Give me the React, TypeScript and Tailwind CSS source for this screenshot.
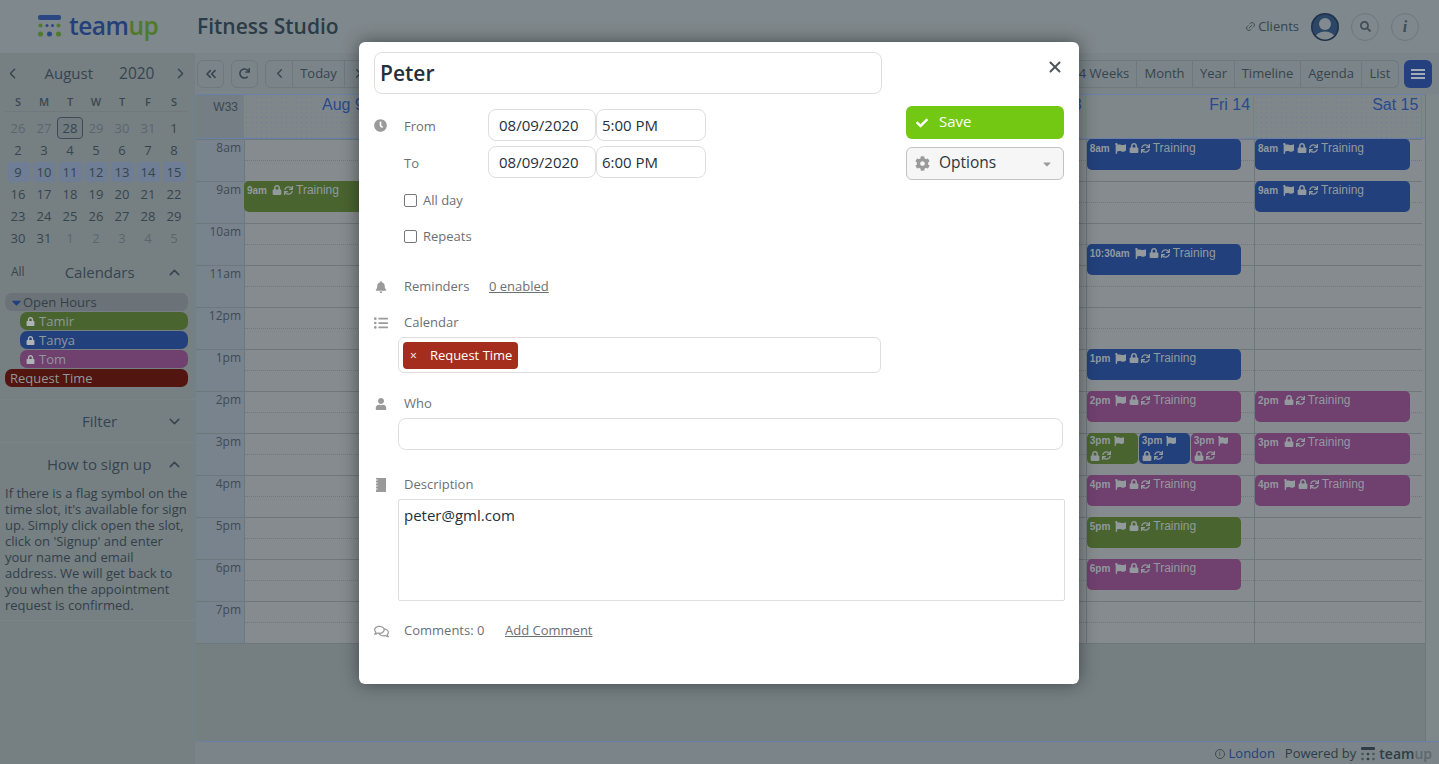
import { ChevronDown, ChevronLeft, ChevronRight, ChevronsLeft, ChevronUp, Link2, X } from "lucide-react";
import {
  FaBell,
  FaCaretDown,
  FaCheck,
  FaClock,
  FaCog,
  FaFlag,
  FaListUl,
  FaLock,
  FaRedo,
  FaRegComments,
  FaSearch,
  FaSync,
  FaUser,
} from "react-icons/fa";

const weeks = [
  ["26", "27", "28", "29", "30", "31", "1"],
  ["2", "3", "4", "5", "6", "7", "8"],
  ["9", "10", "11", "12", "13", "14", "15"],
  ["16", "17", "18", "19", "20", "21", "22"],
  ["23", "24", "25", "26", "27", "28", "29"],
  ["30", "31", "1", "2", "3", "4", "5"],
];

const hours = ["8am", "9am", "10am", "11am", "12pm", "1pm", "2pm", "3pm", "4pm", "5pm", "6pm", "7pm"];

type CalEvent = {
  time: string;
  at: number;
  color: string;
  flag?: boolean;
  x?: number;
  w?: number;
  narrow?: boolean;
};

const green = "#4a6430";
const blue = "#22407b";
const purple = "#70406f";

const days: { label: string; weekend?: boolean; events: CalEvent[] }[] = [
  { label: "Aug 9", weekend: true, events: [{ time: "9am", at: 1, color: green, x: -1, w: 168 }] },
  { label: "Mon 10", events: [] },
  { label: "Tue 11", events: [] },
  { label: "Wed 12", events: [] },
  { label: "Thu 13", events: [] },
  {
    label: "Fri 14",
    events: [
      { time: "8am", at: 0, color: blue, flag: true },
      { time: "10:30am", at: 2.5, color: blue, flag: true },
      { time: "1pm", at: 5, color: blue, flag: true },
      { time: "2pm", at: 6, color: purple, flag: true },
      { time: "3pm", at: 7, color: green, flag: true, x: 0, w: 51, narrow: true },
      { time: "3pm", at: 7, color: blue, flag: true, x: 52, w: 51, narrow: true },
      { time: "3pm", at: 7, color: purple, flag: true, x: 104, w: 50, narrow: true },
      { time: "4pm", at: 8, color: purple, flag: true },
      { time: "5pm", at: 9, color: green, flag: true },
      { time: "6pm", at: 10, color: purple, flag: true },
    ],
  },
  {
    label: "Sat 15",
    weekend: true,
    events: [
      { time: "8am", at: 0, color: blue, flag: true, w: 155 },
      { time: "9am", at: 1, color: blue, flag: true, w: 155 },
      { time: "2pm", at: 6, color: purple, w: 155 },
      { time: "3pm", at: 7, color: purple, w: 155 },
      { time: "4pm", at: 8, color: purple, flag: true, w: 155 },
    ],
  },
];

function Logo() {
  return (
    <svg width="24" height="23" viewBox="0 0 24 23" className="shrink-0">
      <rect x="0" y="0" width="23" height="5" rx="2" fill="#2a4783" />
      <circle cx="2.5" cy="10.5" r="2" fill="#4f7a2c" />
      <circle cx="9" cy="10.5" r="1.5" fill="#2a4783" />
      <circle cx="14.5" cy="10.5" r="1.5" fill="#2a4783" />
      <circle cx="20.5" cy="10.5" r="2" fill="#4f7a2c" />
      <circle cx="2.5" cy="19" r="2.5" fill="#4f7a2c" />
      <circle cx="11.5" cy="19" r="2.5" fill="#2a4783" />
      <circle cx="20.5" cy="19" r="2.5" fill="#4f7a2c" />
    </svg>
  );
}

function Avatar() {
  return (
    <svg width="28" height="28" viewBox="0 0 28 28" className="ml-[12px] shrink-0">
      <clipPath id="avatar-clip">
        <circle cx="14" cy="14" r="12.5" />
      </clipPath>
      <circle cx="14" cy="14" r="14" fill="#1f3148" />
      <circle cx="14" cy="14" r="12.5" fill="#2b4666" />
      <g clipPath="url(#avatar-clip)" fill="#818a8e">
        <circle cx="14" cy="11" r="6" />
        <ellipse cx="14" cy="25" rx="10" ry="6.5" />
      </g>
    </svg>
  );
}

function Header() {
  return (
    <header className="flex h-[53px] shrink-0 items-center bg-[#7f888c] pl-[38px] pr-[20px]">
      <Logo />
      <span className="ml-[7px] w-[128px] text-[24.5px] leading-none font-semibold tracking-[-0.5px] text-[#24407a]">
        team<span className="text-[#4f7a2c]">up</span>
      </span>
      <span className="text-[21px] font-semibold text-[#2b3b47]">Fitness Studio</span>
      <div className="ml-auto flex items-center">
        <Link2 size={11} className="-rotate-45 text-[#3c4a54]" />
        <span className="ml-[2px] text-[13px] text-[#36444e]">Clients</span>
        <Avatar />
        <div className="ml-[12px] flex h-[28px] w-[28px] items-center justify-center rounded-full border border-[#6e787c]">
          <FaSearch size={11} className="text-[#414d55]" />
        </div>
        <div className="ml-[12px] flex h-[28px] w-[28px] items-center justify-center rounded-full border border-[#6e787c] font-['Liberation_Serif',serif] text-[16px] font-bold italic text-[#414d55]">
          i
        </div>
      </div>
    </header>
  );
}

function MiniCalendar() {
  return (
    <div>
      <div className="flex h-[41px] items-center justify-between pl-[4px] pr-[6px] text-[15px] text-[#36444e]">
        <ChevronLeft size={17} />
        <span className="ml-[23px] w-[74px]">August</span>
        <span className="mr-[17px] text-[15.5px]">2020</span>
        <ChevronRight size={17} />
      </div>
      <div className="ml-[5px] mr-[8px] grid h-[18px] grid-cols-7 items-center border-b border-[#6f797d] text-center text-[11px] font-semibold text-[#3a4751]">
        {["S", "M", "T", "W", "T", "F", "S"].map((d, i) => (
          <span key={i}>{d}</span>
        ))}
      </div>
      <div className="ml-[5px] mr-[8px] mt-[5px] grid grid-cols-7 text-center text-[13px] leading-[22px]">
        {weeks.flatMap((week, w) =>
          week.map((d, i) => {
            const muted = (w === 0 && i < 6) || (w === 5 && i > 1);
            if (w === 0 && d === "28") {
              return (
                <span key={d} className="h-[22px] rounded-[4px] border border-[#3f4a52] bg-[#727c80] leading-[20px] text-[#36444e]">
                  {d}
                </span>
              );
            }
            return (
              <span key={`${w}-${d}`} className={`flex h-[22px] items-center justify-center ${muted ? "text-[#5a666e]" : "text-[#36444e]"}`}>
                {w === 2 ? <span className="block h-[20px] w-[23px] rounded-[3px] bg-[#6f7e94] leading-[20px]">{d}</span> : d}
              </span>
            );
          }),
        )}
      </div>
    </div>
  );
}

function CalendarRow({ name, bg, indent }: { name: string; bg: string; indent?: boolean }) {
  return (
    <div
      className={`flex h-[18px] items-center rounded-[7px] pt-[1px] text-[13px] text-[#8f989b] ${indent ? "ml-[15px] pl-[6px]" : "pl-[5px]"}`}
      style={{ backgroundColor: bg }}
    >
      {indent && <FaLock size={9} className="mr-[4px] text-[#aeb4b6]" />}
      {name}
    </div>
  );
}

function Sidebar() {
  return (
    <aside className="w-[195px] shrink-0 bg-[#768083]">
      <MiniCalendar />
      <div className="mt-[10px] flex h-[26px] items-center pl-[11px] pr-[12px] text-[#36444e]">
        <span className="text-[12px]">All</span>
        <span className="ml-[40px] text-[15px]">Calendars</span>
        <ChevronUp size={17} className="ml-auto" />
      </div>
      <div className="mt-[8px] ml-[5px] flex w-[183px] flex-col gap-[1px]">
        <div className="flex h-[18px] items-center rounded-[7px] bg-[#6c7378] pl-[4px] pt-[1px] text-[13px] text-[#323f48]">
          <FaCaretDown size={15} className="mr-[-1px] text-[#22407b]" />
          Open Hours
        </div>
        <CalendarRow name="Tamir" bg={green} indent />
        <CalendarRow name="Tanya" bg={blue} indent />
        <CalendarRow name="Tom" bg={purple} indent />
        <CalendarRow name="Request Time" bg="#52150f" />
      </div>
      <div className="mt-[12px] flex h-[44px] items-center border-y border-[#7a8488] pr-[12px] text-[#36444e]">
        <span className="ml-[82px] text-[15px]">Filter</span>
        <ChevronDown size={17} className="ml-auto" />
      </div>
      <div className="flex h-[42px] items-center pr-[12px] text-[#36444e]">
        <span className="ml-[47px] text-[15px]">How to sign up</span>
        <ChevronUp size={17} className="ml-auto" />
      </div>
      <p className="border-b border-[#7a8488] px-[5px] pb-[7px] text-[13px] leading-[16px] text-[#323f48]">
        If there is a flag symbol on the time slot, it's available for sign up. Simply click open the slot, click on 'Signup' and enter your name and email
        <br />
        address. We will get back to you when the appointment request is confirmed.
      </p>
    </aside>
  );
}

function ToolButton({ children, className = "" }: { children: React.ReactNode; className?: string }) {
  return (
    <div className={`flex h-[28px] items-center justify-center border border-[#6f797d] text-[13px] text-[#36444e] ${className}`}>
      {children}
    </div>
  );
}

function Toolbar() {
  const views: [string, string][] = [
    ["4 Weeks", "w-[66px]"],
    ["Month", "w-[56px]"],
    ["Year", "w-[42px]"],
    ["Timeline", "w-[66px]"],
    ["Agenda", "w-[61px]"],
    ["List", "w-[37px]"],
  ];
  return (
    <div className="flex h-[41px] shrink-0 items-center bg-[#7b8589] pl-[2px] pr-[7px]">
      <ToolButton className="w-[27px] rounded-[6px]">
        <ChevronsLeft size={16} strokeWidth={2.4} />
      </ToolButton>
      <ToolButton className="ml-[7px] w-[27px] rounded-[6px]">
        <FaRedo size={11} />
      </ToolButton>
      <ToolButton className="ml-[7px] w-[28px] rounded-l-[6px]">
        <ChevronLeft size={15} />
      </ToolButton>
      <ToolButton className="w-[52px] border-l-0">Today</ToolButton>
      <ToolButton className="w-[28px] border-l-0">
        <ChevronRight size={15} />
      </ToolButton>
      <div className="ml-auto flex">
        {views.map(([v, w], i) => (
          <ToolButton key={v} className={`${w} ${i > 0 ? "border-l-0" : ""} ${i === views.length - 1 ? "rounded-r-[6px]" : ""}`}>
            {v}
          </ToolButton>
        ))}
      </div>
      <div className="ml-[5px] flex h-[28px] w-[28px] flex-col items-center justify-center gap-[2px] rounded-[6px] bg-[#24407f]">
        <span className="h-[2px] w-[14px] bg-[#a3acb5]" />
        <span className="h-[2px] w-[14px] bg-[#a3acb5]" />
        <span className="h-[2px] w-[14px] bg-[#a3acb5]" />
      </div>
    </div>
  );
}

function EventChip({ ev }: { ev: CalEvent }) {
  const icons = (
    <>
      {!ev.narrow && ev.flag && <FaFlag size={11} className="mr-[3px] shrink-0" />}
      <FaLock size={10} className="mr-[2px] shrink-0" />
      <FaSync size={9} className="mr-[3px] shrink-0" />
    </>
  );
  return (
    <div
      className="absolute overflow-hidden rounded-[5px] pl-[3px] font-['Liberation_Sans',sans-serif] text-[#929a9e]"
      style={{
        top: ev.at * 42,
        left: ev.x ?? 0,
        width: ev.w ?? 154,
        height: 31,
        backgroundColor: ev.color,
      }}
    >
      {ev.narrow ? (
        <>
          <div className="flex h-[15px] items-center text-[10px] font-bold">
            {ev.time}
            <FaFlag size={10} className="ml-[4px]" />
          </div>
          <div className="flex h-[15px] items-center">{icons}</div>
        </>
      ) : (
        <div className="flex h-[18px] items-center whitespace-nowrap">
          <span className="mr-[5px] text-[10px] font-bold">{ev.time}</span>
          {icons}
          <span className="text-[12px]">Training</span>
        </div>
      )}
    </div>
  );
}

function CalendarGrid() {
  return (
    <div className="flex min-h-0 flex-1 border-b border-l border-[#6a80a8] bg-[#757f82]">
      <div className="w-[1229px] shrink-0">
        <div className="grid h-[45px] grid-cols-[48px_repeat(7,168.35px)] border-y border-[#6a80a8] bg-[#7f878b]">
          <div className="flex justify-end border-r border-[#6a80a8] bg-[#747e84] pr-[5px] pt-[3px] font-['Liberation_Sans',sans-serif] text-[12px] text-[#3a4751]">
            W33
          </div>
          {days.map((d, i) => (
            <div
              key={d.label}
              className={`border-r border-[#6a80a8] font-['Liberation_Sans',sans-serif] text-[16px] leading-[20px] text-[#2a4a8c] ${i === 0 ? "pl-[78px]" : "pr-[3px] text-right"} ${d.weekend ? "bg-[radial-gradient(#6d7f9e_0.6px,transparent_0.6px)] bg-[length:5px_5px]" : ""}`}
            >
              {d.label}
            </div>
          ))}
        </div>
        <div className="grid grid-cols-[48px_repeat(7,168.35px)] border-b border-[#6e777c] bg-[#858b8e]">
          <div className="bg-[#79838d]">
            {hours.map((h) => (
              <div key={h} className="h-[42px] border-t border-[#6e777c] pr-[3px] text-right text-[12px] leading-[16px] text-[#3f4a52]">
                {h}
              </div>
            ))}
          </div>
          {days.map((d) => (
            <div key={d.label} className="relative border-l border-[#6e777c]">
              {hours.map((h) => (
                <div key={h} className="h-[42px] border-t border-[#6e777c]">
                  <div className="h-[21px] border-b border-dotted border-[#6e777c]" />
                </div>
              ))}
              {d.events.map((ev, i) => (
                <EventChip key={i} ev={ev} />
              ))}
            </div>
          ))}
        </div>
      </div>
      <div className="flex-1 border-l border-[#6e777c] bg-[#7e878a]" />
    </div>
  );
}

function Footer() {
  return (
    <div className="flex h-[22px] shrink-0 items-center justify-end pr-[7px] pt-[1px] text-[13px] text-[#2f3c46]">
      <span className="flex h-[10px] w-[10px] items-center justify-center rounded-full border border-[#3f4a52] text-[7px] leading-none">i</span>
      <span className="ml-[4px] text-[#24407f]">London</span>
      <span className="ml-[10px]">Powered by</span>
      <svg width="14" height="14" viewBox="0 0 14 14" className="ml-[5px]">
        <rect x="0" y="0" width="14" height="3" rx="1" fill="#2f3c46" />
        <circle cx="1.5" cy="7" r="1.3" fill="#4a555d" />
        <circle cx="7" cy="7" r="1.3" fill="#2f3c46" />
        <circle cx="12.5" cy="7" r="1.3" fill="#4a555d" />
        <circle cx="1.5" cy="12" r="1.3" fill="#4a555d" />
        <circle cx="7" cy="12" r="1.3" fill="#2f3c46" />
        <circle cx="12.5" cy="12" r="1.3" fill="#4a555d" />
      </svg>
      <span className="ml-[4px] text-[14px] leading-none font-semibold text-[#2f3c46]">
        team<span className="text-[#5e686e]">up</span>
      </span>
    </div>
  );
}

const fieldClass = "rounded-[8px] border border-[#dedede] bg-white text-[15px] font-medium text-[#24303a] outline-none";

function Label({ children, className = "" }: { children: React.ReactNode; className?: string }) {
  return <span className={`text-[13px] text-[#6c7074] ${className}`}>{children}</span>;
}

function IconSlot({ children }: { children: React.ReactNode }) {
  return <span className="flex w-[30px] shrink-0 justify-start text-[#9a9a9a]">{children}</span>;
}

function Modal() {
  return (
    <div className="absolute left-[359px] top-[42px] h-[642px] w-[720px] rounded-[6px] bg-white pl-[15px] pt-[10px] shadow-[0_0_18px_rgba(0,0,0,0.45)]">
      <button className="absolute right-[15px] top-[16px] text-[#4f5459]">
        <X size={18} strokeWidth={2.6} />
      </button>
      <div className="flex">
        <div className="w-[508px] shrink-0">
          <input
            defaultValue="Peter"
            className="h-[42px] w-full rounded-[8px] border border-[#dedede] px-[5px] text-[21px] font-semibold text-[#24303a] outline-none"
          />
          <div className="mt-[15px] flex h-[32px] items-center">
            <IconSlot>
              <FaClock size={13} />
            </IconSlot>
            <Label className="w-[84px] pt-[3px]">From</Label>
            <input defaultValue="08/09/2020" className={`${fieldClass} h-[32px] w-[108px] pl-[10px]`} />
            <input defaultValue="5:00 PM" className={`${fieldClass} h-[32px] w-[110px] pl-[5px]`} />
          </div>
          <div className="mt-[5px] flex h-[32px] items-center">
            <IconSlot>{null}</IconSlot>
            <Label className="w-[84px] pt-[3px]">To</Label>
            <input defaultValue="08/09/2020" className={`${fieldClass} h-[32px] w-[108px] pl-[10px]`} />
            <input defaultValue="6:00 PM" className={`${fieldClass} h-[32px] w-[110px] pl-[5px]`} />
          </div>
          <label className="mt-[12px] ml-[30px] flex h-[20px] items-center gap-[6px]">
            <input type="checkbox" className="h-[13px] w-[13px] appearance-none rounded-[2px] border border-[#777]" />
            <Label className="pt-[1px]">All day</Label>
          </label>
          <label className="mt-[16px] ml-[30px] flex h-[20px] items-center gap-[6px]">
            <input type="checkbox" className="h-[13px] w-[13px] appearance-none rounded-[2px] border border-[#777]" />
            <Label className="pt-[1px]">Repeats</Label>
          </label>
          <div className="mt-[31px] flex h-[20px] items-center">
            <IconSlot>
              <FaBell size={12} className="ml-[1px]" />
            </IconSlot>
            <Label className="w-[85px]">Reminders</Label>
            <Label className="underline">0 enabled</Label>
          </div>
          <div className="mt-[16px] flex h-[20px] items-center">
            <IconSlot>
              <FaListUl size={14} />
            </IconSlot>
            <Label>Calendar</Label>
          </div>
          <div className="mt-[4px] ml-[24px] flex h-[36px] w-[483px] items-start rounded-[6px] border border-[#dedede] pl-[4px] pt-[4px]">
            <div className="flex h-[27px] items-center rounded-[4px] bg-[#a52d1d] pl-[7px] pr-[6px] text-[13px] text-white">
              <span className="mr-[13px] text-[12px]">×</span>
              Request Time
            </div>
          </div>
        </div>
        <div className="ml-[24px] w-[158px] shrink-0 pt-[54px]">
          <button className="flex h-[33px] w-full items-center rounded-[6px] bg-[#72c812] pb-[2px] pl-[10px] text-[15px] text-white">
            <FaCheck size={12} className="mr-[11px] mt-[2px]" />
            Save
          </button>
          <button className="mt-[8px] flex h-[33px] w-full items-center rounded-[6px] border border-[#c2c2c2] bg-[#f6f6f6] pb-[2px] pl-[8px] pr-[10px] text-[15.5px] font-medium text-[#2b3640]">
            <FaCog size={15} className="mr-[9px] mt-[2px] text-[#9a9a9a]" />
            Options
            <FaCaretDown size={12} className="ml-auto mt-[2px] text-[#9a9a9a]" />
          </button>
        </div>
      </div>
      <div className="mt-[21px] flex h-[20px] items-center">
        <IconSlot>
          <FaUser size={12} className="ml-[1px]" />
        </IconSlot>
        <Label>Who</Label>
      </div>
      <input className={`${fieldClass} mt-[4px] ml-[24px] block h-[32px] w-[665px]`} />
      <div className="mt-[25px] flex h-[20px] items-center">
        <IconSlot>
          <svg width="10" height="14" viewBox="0 0 10 14" className="ml-[2px]">
            <rect x="0" y="0" width="10" height="14" fill="#9a9a9a" />
            <path d="M0 2h1.5M0 5h1.5M0 8h1.5M0 11h1.5" stroke="#fff" strokeWidth="1" />
          </svg>
        </IconSlot>
        <Label>Description</Label>
      </div>
      <textarea
        defaultValue="peter@gml.com"
        className="mt-[4px] ml-[24px] block h-[102px] w-[667px] resize-none rounded-[2px] border border-[#dedede] px-[5px] pt-[4px] text-[15px] text-[#24303a] outline-none"
      />
      <div className="mt-[20px] flex h-[20px] items-center">
        <IconSlot>
          <FaRegComments size={15} />
        </IconSlot>
        <Label className="w-[101px]">Comments: 0</Label>
        <Label className="underline">Add Comment</Label>
      </div>
    </div>
  );
}

export default function App() {
  return (
    <div className="relative flex h-[764px] w-[1439px] flex-col overflow-hidden bg-[#7b8589] font-['Open_Sans',sans-serif]">
      <Header />
      <div className="flex min-h-0 flex-1">
        <Sidebar />
        <main className="flex min-w-0 flex-1 flex-col">
          <Toolbar />
          <CalendarGrid />
          <Footer />
        </main>
      </div>
      <Modal />
    </div>
  );
}
